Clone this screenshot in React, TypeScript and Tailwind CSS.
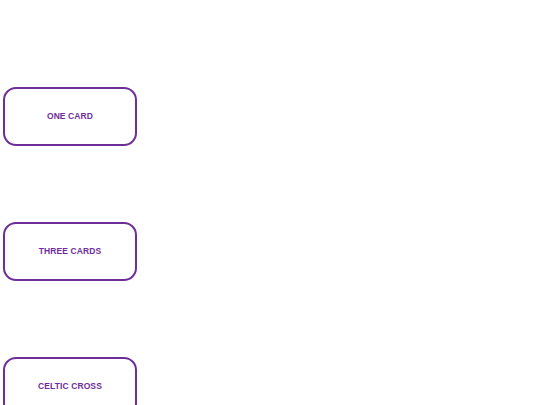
import React from "react";

export default function App() {
  const items = ["ONE CARD", "THREE CARDS", "CELTIC CROSS"];
  return (
    <div className="w-[540px] h-[405px] bg-white overflow-hidden" style={{ fontFamily: '"Liberation Sans", Arial, sans-serif' }}>
      <div className="flex flex-col gap-[76px] pl-[3px] pt-[87px]">
        {items.map((t) => (
          <button
            key={t}
            className="w-[134px] h-[59px] shrink-0 rounded-[13px] border-[2.5px] border-[#6e2e9a] bg-white flex items-center justify-center text-[8.5px] font-bold text-[#6e2e9a] tracking-[0.1px]"
          >
            {t}
          </button>
        ))}
      </div>
    </div>
  );
}
